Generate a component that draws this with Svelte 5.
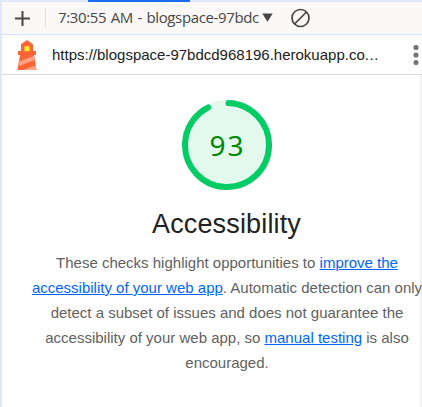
<script>
  const radius = 42;
  const circumference = 2 * Math.PI * radius;
  const score = 93;
  const arc = (circumference * score) / 100 - 3;
</script>

<div class="panel">
  <div class="tabs"><span></span></div>
  <div class="toolbar">
    <svg class="plus" width="17" height="17" viewBox="0 0 17 17"><path d="M8.5 1v15M1 8.5h15" stroke="#474747" stroke-width="2" /></svg>
    <i class="divider"></i>
    <span class="report">7:30:55 AM - blogspace-97bdc</span>
    <svg class="arrow" width="11" height="9" viewBox="0 0 11 9"><path d="M.3.5h10.4L5.5 8.7z" fill="#474747" /></svg>
    <svg class="clear" width="20" height="20" viewBox="0 0 20 20" fill="none" stroke="#474747" stroke-width="1.7"><circle cx="9.5" cy="10" r="8.5" /><path d="M3.5 16 15.5 4" /></svg>
  </div>
  <div class="urlbar">
    <svg class="logo" width="20" height="31" viewBox="0 0 20 31">
      <path d="M10 0 16 4.2V11h3v4h-2l2.6 15H.4L3 15H1v-4h3V4.2z" fill="#ff6434" />
      <path d="M2 21.5 16.9 16l.6 4L1.3 26.2zM6 30 18.6 25.2l.8 4.8z" fill="#ffa385" />
      <path d="M7.5 6.3h5v4.8h-5z" fill="#fff12e" />
    </svg>
    <span class="url">https://blogspace-97bdcd968196.herokuapp.co<b>...</b></span>
    <svg class="menu" width="6" height="20" viewBox="0 0 6 20" fill="#757575"><circle cx="3" cy="2.5" r="2.6" /><circle cx="3" cy="10" r="2.6" /><circle cx="3" cy="17.5" r="2.6" /></svg>
  </div>
  <main>
    <div class="gauge">
      <svg width="90" height="90" viewBox="0 0 90 90">
        <circle cx="45" cy="45" r="45" fill="#e3f9ed" />
        <circle cx="45" cy="45" r={radius} fill="none" stroke="#0c6" stroke-width="6" stroke-linecap="round" stroke-dasharray="{arc} {circumference}" transform="rotate(-87.9 45 45)" />
      </svg>
      <span>{score}</span>
    </div>
    <h1>Accessibility</h1>
    <p>
      These checks highlight opportunities to <a href="#improve">improve the<br />accessibility of your web app</a>. Automatic detection can only<br />detect a subset of issues and does not guarantee the<br />accessibility of your web app, so <a href="#manual">manual testing</a> is also<br />encouraged.
    </p>
  </main>
</div>

<style>
  .panel {
    box-sizing: border-box;
    width: 422px;
    height: 407px;
    overflow: hidden;
    border-left: 2px solid #dfe8f7;
    background: #fff;
    font-family: "Liberation Sans", Arial, sans-serif;
  }
  .tabs { height: 2px; background: #dfe8f7; }
  .tabs span { display: block; width: 102px; height: 2px; margin-left: 86px; background: #1a6cf5; }
  .toolbar {
    box-sizing: border-box;
    display: flex;
    align-items: center;
    height: 33px;
    padding-left: 12px;
    background: #faf9f8;
    border-bottom: 1px solid #d3e3fd;
  }
  svg { display: block; flex: none; }
  .plus { margin-top: 1px; }
  .divider { width: 1px; height: 20px; margin: 0 12px 0 14px; background: #d3e3fd; }
  .report {
    width: 202px;
    white-space: nowrap;
    font: 15px/22px "Open Sans", "Noto Sans", sans-serif;
    letter-spacing: -0.37px;
    word-spacing: 1px;
    color: #474747;
    margin-top: -2px;
  }
  .arrow { margin: -2px 0 0 2px; }
  .clear { margin-left: 18px; }
  .urlbar {
    box-sizing: border-box;
    display: flex;
    align-items: center;
    height: 40px;
    padding-left: 15px;
    border-bottom: 1px solid #dadada;
  }
  .logo { margin-top: 1px; }
  .url { width: 346px; margin-left: 15px; font-size: 15px; white-space: nowrap; color: #212121; }
  .url b { font-weight: 400; letter-spacing: 0.6px; }
  .menu { margin-left: 15px; }
  main {
    box-sizing: border-box;
    display: flex;
    flex-direction: column;
    align-items: center;
    height: 332px;
    padding-top: 25px;
    padding-left: 31px;
    border-right: 2px solid #f1f1f1;
  }
  .gauge { display: grid; place-items: center; }
  .gauge > * { grid-area: 1 / 1; }
  .gauge span { font: 28px/36px "Noto Sans", sans-serif; letter-spacing: 2px; padding-left: 2px; color: #080; }
  h1 { margin: 15px 0 0; font-size: 27px; line-height: 38px; font-weight: 400; letter-spacing: 0.15px; color: #212121; white-space: nowrap; }
  p { margin: 7px -1px 0 0; font-size: 15px; line-height: 25px; text-align: center; white-space: nowrap; color: #616161; }
  a { color: #06f; text-decoration: underline; }
</style>
